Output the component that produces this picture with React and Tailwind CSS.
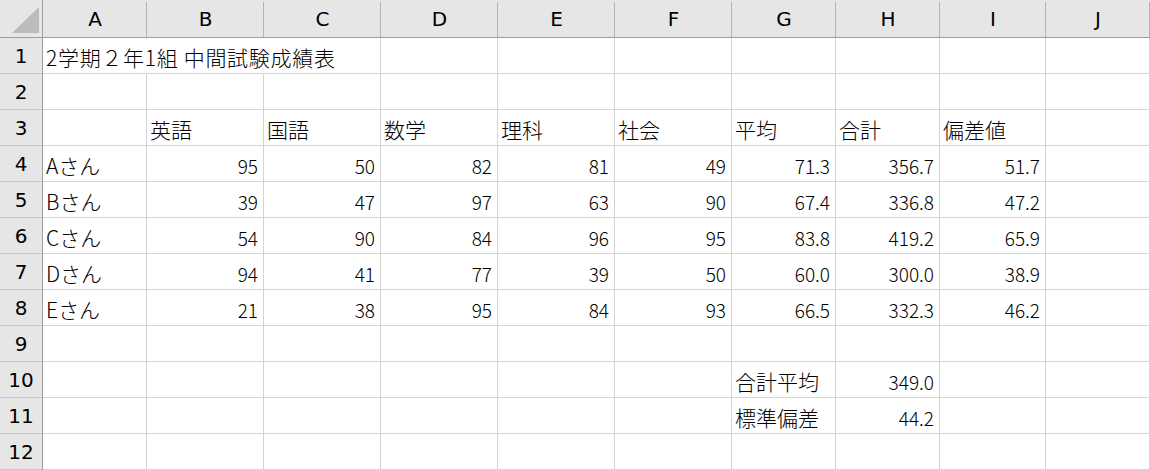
import React from "react";

const COLS = ["A", "B", "C", "D", "E", "F", "G", "H", "I", "J"];

const T = (s) => ({ t: s, kind: "text" });
const N = (s) => ({ t: s, kind: "num" });

const data = {
  3: {
    B: T("英語"),
    C: T("国語"),
    D: T("数学"),
    E: T("理科"),
    F: T("社会"),
    G: T("平均"),
    H: T("合計"),
    I: T("偏差値"),
  },
  4: { A: T("Aさん"), B: N("95"), C: N("50"), D: N("82"), E: N("81"), F: N("49"), G: N("71.3"), H: N("356.7"), I: N("51.7") },
  5: { A: T("Bさん"), B: N("39"), C: N("47"), D: N("97"), E: N("63"), F: N("90"), G: N("67.4"), H: N("336.8"), I: N("47.2") },
  6: { A: T("Cさん"), B: N("54"), C: N("90"), D: N("84"), E: N("96"), F: N("95"), G: N("83.8"), H: N("419.2"), I: N("65.9") },
  7: { A: T("Dさん"), B: N("94"), C: N("41"), D: N("77"), E: N("39"), F: N("50"), G: N("60.0"), H: N("300.0"), I: N("38.9") },
  8: { A: T("Eさん"), B: N("21"), C: N("38"), D: N("95"), E: N("84"), F: N("93"), G: N("66.5"), H: N("332.3"), I: N("46.2") },
  10: { G: T("合計平均"), H: N("349.0") },
  11: { G: T("標準偏差"), H: N("44.2") },
};

const cjk = { fontFamily: '"Noto Sans CJK JP", sans-serif' };
const hdr = { fontFamily: '"DejaVu Sans", sans-serif' };

function TextCell({ children, span }) {
  return (
    <div
      className={
        "border-r border-b border-[#d4d4d4] bg-white flex items-end justify-start pl-[3px] pb-[4px] text-[21px] leading-[24px] font-light text-black whitespace-nowrap " +
        (span ? "col-span-3 tracking-[0.7px]" : "")
      }
      style={cjk}
    >
      {children}
    </div>
  );
}

function Cell({ cell }) {
  if (!cell) {
    return <div className="border-r border-b border-[#d4d4d4] bg-white" />;
  }
  if (cell.kind === "num") {
    return (
      <div
        className="border-r border-b border-[#d4d4d4] bg-white flex items-end justify-end pr-[5px] pb-[4px] text-[19px] leading-[22px] font-light text-black whitespace-nowrap"
        style={cjk}
      >
        {cell.t}
      </div>
    );
  }
  return <TextCell>{cell.t}</TextCell>;
}

export default function App() {
  const rows = Array.from({ length: 12 }, (_, i) => i + 1);
  return (
    <div className="w-[1150px] h-[470px] bg-white overflow-hidden">
      <div className="grid grid-cols-[43px_104px_117px_117px_117px_117px_117px_104px_104px_106px_104px] grid-rows-[38px_repeat(12,36px)]">
        {/* corner */}
        <div className="bg-[#e6e6e6] border-r border-b border-[#9e9e9e] relative">
          <svg width="42" height="37" className="absolute left-0 top-0">
            <polygon points="12,33 39,33 39,7" fill="#bcbcbc" />
          </svg>
        </div>
        {COLS.map((c) => (
          <div
            key={c}
            className="bg-[#e6e6e6] border-b border-[#9e9e9e] flex items-center justify-center relative text-[20px] text-black"
            style={hdr}
          >
            <span className="absolute right-0 top-[2px] bottom-0 w-px bg-[#b4b4b4]" />
            {c}
          </div>
        ))}
        {rows.map((r) => (
          <React.Fragment key={r}>
            <div
              className="bg-[#e6e6e6] border-r border-[#9e9e9e] flex items-center justify-center relative text-[20px] text-black"
              style={hdr}
            >
              <span className="absolute left-0 right-0 bottom-0 h-px bg-[#c8c8c8]" />
              {r}
            </div>
            {r === 1 ? (
              <>
                <TextCell span>2学期２年1組 中間試験成績表</TextCell>
                {COLS.slice(3).map((c) => (
                  <Cell key={c} />
                ))}
              </>
            ) : (
              COLS.map((c) => <Cell key={c} cell={data[r] && data[r][c]} />)
            )}
          </React.Fragment>
        ))}
      </div>
    </div>
  );
}
